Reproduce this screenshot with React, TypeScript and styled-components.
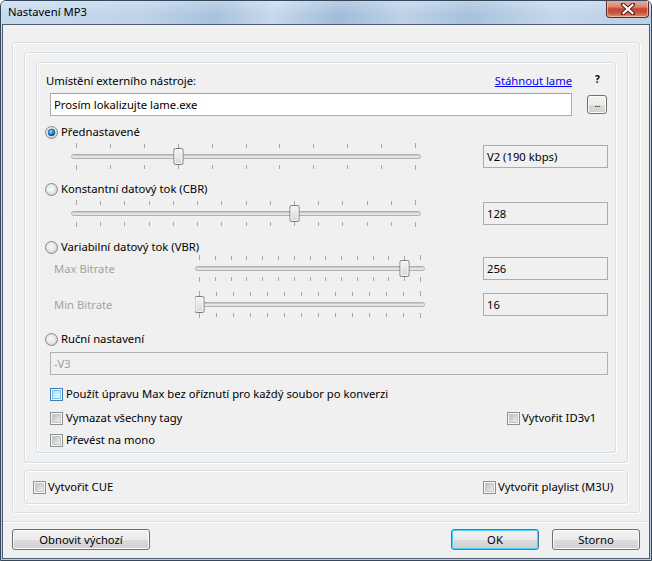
import React, { useId } from "react";
import styled, { createGlobalStyle } from "styled-components";

const FONT = `"Noto Sans", "Segoe UI", sans-serif`;

const GlobalStyle = createGlobalStyle`
  html, body { margin: 0; padding: 0; background: #ffffff; }
  body { font-family: ${FONT}; font-size: 11.25px; color: #000; }
  * { box-sizing: border-box; }
`;

const Window = styled.div`
  width: 652px;
  height: 561px;
  border: 1px solid #34475c;
  border-radius: 6px 6px 0 0;
  background: linear-gradient(180deg, #c9dcee 0%, #b5cde6 100%);
  display: flex;
  flex-direction: column;
  overflow: hidden;
`;

const TitleBar = styled.div`
  height: 23px;
  flex: 0 0 23px;
  display: flex;
  align-items: flex-start;
  justify-content: space-between;
  background:
    linear-gradient(180deg, rgba(255,255,255,0.25) 0%, rgba(255,255,255,0) 60%),
    linear-gradient(100deg, #c8dbee 0%, #bed3e9 22%, #a9c2dd 33%, #c6d9ec 42%, #a2bcd9 52%, #bdd2e8 62%, #a8c1dc 72%, #c4d8ec 85%, #b9cfe6 100%);
`;

const TitleText = styled.span`
  font-family: ${FONT};
  font-size: 11.25px;
  line-height: 22px;
  padding-left: 7px;
  color: #000;
`;

const CloseButton = styled.div`
  width: 43px;
  height: 18px;
  margin-top: -1px;
  margin-right: 2px;
  border: 1px solid #5b2a26;
  border-top: none;
  border-radius: 0 0 4px 4px;
  background: linear-gradient(180deg, #eab1a3 0%, #d9866f 40%, #c24a33 52%, #c9553c 75%, #e09077 100%);
  box-shadow: inset 0 0 0 1px rgba(255, 220, 210, 0.55);
  display: flex;
  align-items: center;
  justify-content: center;
`;

const Client = styled.div`
  flex: 1;
  margin: 0 1px 1px 1px;
  border: 1px solid #4e5e70;
  background: #f0f0f0;
  display: flex;
  flex-direction: column;
`;

const Body = styled.div`
  padding: 17px 9px 0 9px;
`;

const Group = styled.div<{ $pad: string; $gap?: number }>`
  border: 1px solid #d5dfe5;
  border-radius: 3px;
  box-shadow: inset 1px 1px 0 #ffffff, 1px 1px 0 #ffffff;
  padding: ${(p) => p.$pad};
  display: flex;
  flex-direction: column;
  gap: ${(p) => p.$gap ?? 0}px;
`;

const Row = styled.div<{ $mt?: number; $h?: number; $pl?: number }>`
  display: flex;
  align-items: center;
  margin-top: ${(p) => p.$mt ?? 0}px;
  height: ${(p) => p.$h ?? 16}px;
  padding-left: ${(p) => p.$pl ?? 0}px;
  font-size: 11.25px;
  line-height: 16px;
  white-space: nowrap;
`;

const Label = styled.span`
  flex: 1;
  padding-left: 1px;
`;

const LinkText = styled.span`
  color: #0000ff;
  text-decoration: underline;
`;

const Help = styled.span`
  width: 6px;
  margin-left: 23px;
  margin-right: 7px;
  font-weight: bold;
  font-size: 10px;
  align-self: flex-start;
  line-height: 10px;
  margin-top: 1px;
`;

const TextBox = styled.div<{ $w: number; $disabled?: boolean }>`
  width: ${(p) => p.$w}px;
  height: 23px;
  margin-left: 5px;
  border: 1px solid ${(p) => (p.$disabled ? "#adb2b5" : "#abadb3")};
  border-top-color: ${(p) => (p.$disabled ? "#adb2b5" : "#a0a3a8")};
  background: ${(p) => (p.$disabled ? "#f0f0f0" : "#ffffff")};
  color: ${(p) => (p.$disabled ? "#9d9d9d" : "#000")};
  padding-left: 3px;
  line-height: 21px;
  font-size: 11.25px;
`;

const BrowseButton = styled.div`
  width: 20px;
  height: 19px;
  margin-left: 15px;
  border: 1px solid #707070;
  border-radius: 3px;
  background: linear-gradient(180deg, #f2f2f2 0%, #ebebeb 50%, #dddddd 51%, #cfcfcf 100%);
  box-shadow: inset 0 0 0 1px #fcfcfc;
  font-size: 9px;
  line-height: 15px;
  text-align: center;
  letter-spacing: -0.5px;
`;

const OptionLabel = styled.span<{ $gap?: number }>`
  display: inline-flex;
  align-items: center;
  gap: ${(p) => p.$gap ?? 3}px;
`;

const FixedCell = styled.div<{ $w: number }>`
  flex: 0 0 ${(p) => p.$w}px;
  display: flex;
  align-items: center;
`;

const SideLabel = styled.span`
  flex: 0 0 150px;
  padding-left: 9px;
  color: #a3a3a3;
`;

const SliderSlot = styled.div<{ $ml?: number }>`
  margin-left: ${(p) => p.$ml ?? 0}px;
  display: flex;
  align-items: center;
`;

const ValueBox = styled.div`
  margin-left: auto;
  width: 125px;
  height: 23px;
  border: 1px solid #acacac;
  background: #f0f0f0;
  padding-left: 3px;
  line-height: 21px;
  font-size: 11.25px;
`;

const Separator = styled.div`
  margin-top: 8px;
  height: 2px;
  border-top: 1px solid #dadada;
  border-bottom: 1px solid #ffffff;
`;

const Footer = styled.div`
  display: flex;
  align-items: center;
  padding: 6px 9px 0 9px;
  gap: 13px;
`;

const Button = styled.div<{ $w: number; $default?: boolean; $push?: boolean }>`
  width: ${(p) => p.$w}px;
  height: 21px;
  margin-left: ${(p) => (p.$push ? "auto" : "0")};
  border: 1px solid ${(p) => (p.$default ? "#3c7fb1" : "#707070")};
  border-radius: 3px;
  background: linear-gradient(180deg, #f2f2f2 0%, #ebebeb 50%, #dddddd 51%, #cfcfcf 100%);
  box-shadow: inset 0 0 0 1px ${(p) => (p.$default ? "#48d1ff" : "#fbfbfb")};
  font-size: 11.25px;
  line-height: 19px;
  text-align: center;
`;

const IconSvg = styled.svg`
  display: block;
  flex: 0 0 auto;
`;

function Radio({ checked }: { checked?: boolean }) {
  const id = useId().replace(/:/g, "");
  return (
    <IconSvg width={13} height={13} viewBox="0 0 13 13">
      <defs>
        <radialGradient id={`g${id}`} cx="45%" cy="45%" r="60%">
          <stop offset="0" stopColor="#fbfbfb" />
          <stop offset="0.6" stopColor="#e6e6e6" />
          <stop offset="1" stopColor="#c2c2c2" />
        </radialGradient>
        <radialGradient id={`b${id}`} cx="40%" cy="35%" r="70%">
          <stop offset="0" stopColor="#a8e0ff" />
          <stop offset="0.45" stopColor="#2f8fdc" />
          <stop offset="1" stopColor="#0c3f7c" />
        </radialGradient>
      </defs>
      <circle cx="6.5" cy="6.5" r="6" fill={`url(#g${id})`} stroke="#8b8b8b" />
      {checked && <circle cx="6.5" cy="6.5" r="3.4" fill={`url(#b${id})`} stroke="#1d4f86" strokeWidth="0.7" />}
    </IconSvg>
  );
}

function Checkbox({ hot }: { hot?: boolean }) {
  const id = useId().replace(/:/g, "");
  return (
    <IconSvg width={13} height={13} viewBox="0 0 13 13">
      <defs>
        <linearGradient id={`c${id}`} x1="0" y1="0" x2="1" y2="1">
          <stop offset="0" stopColor={hot ? "#b1dcfb" : "#b7bbc0"} />
          <stop offset="1" stopColor={hot ? "#eaf6fe" : "#f3f3f3"} />
        </linearGradient>
      </defs>
      <rect x="0.5" y="0.5" width="12" height="12" fill="#f8f8f8" stroke={hot ? "#3c7fb1" : "#8e8f8f"} />
      <rect x="2.5" y="2.5" width="8" height="8" fill={`url(#c${id})`} stroke={hot ? "#79c0ef" : "#c5c8cc"} />
    </IconSvg>
  );
}

function Slider({ width, ticks, index, inset }: { width: number; ticks: number; index: number; inset: number }) {
  const id = useId().replace(/:/g, "");
  const step = (width - 1 - inset * 2) / (ticks - 1);
  const xs = Array.from({ length: ticks }, (_, i) => Math.round(inset + i * step) + 0.5);
  const tx = xs[index];
  return (
    <IconSvg width={width} height={27} viewBox={`0 0 ${width} 27`}>
      <defs>
        <linearGradient id={`t${id}`} x1="0" y1="0" x2="0" y2="1">
          <stop offset="0" stopColor="#f7f7f7" />
          <stop offset="1" stopColor="#d6d6d6" />
        </linearGradient>
      </defs>
      {xs.map((x, i) => {
        const end = i === 0 || i === ticks - 1;
        return (
          <g key={i} stroke="#a8a8a8" strokeWidth="1">
            <line x1={x} y1={end ? 0 : 1} x2={x} y2={5} />
            <line x1={x} y1={22} x2={x} y2={end ? 27 : 26} />
          </g>
        );
      })}
      <rect x="0.5" y="11.5" width={width - 1} height="4" rx="2" fill="#e4e4e4" stroke="#b0b0b0" />
      <line x1="2" y1="12.5" x2={width - 2} y2="12.5" stroke="#c8c8c8" />
      <rect x={tx - 4.5} y="5.5" width="9" height="16" rx="1.5" fill={`url(#t${id})`} stroke="#7a7a7a" />
      <rect x={tx - 3.5} y="6.5" width="7" height="14" rx="1" fill="none" stroke="#fdfdfd" strokeOpacity="0.8" />
    </IconSvg>
  );
}

function CloseX() {
  return (
    <IconSvg width={14} height={12} viewBox="0 0 14 12">
      <path d="M2 1.5 L12 10.5 M12 1.5 L2 10.5" stroke="#5a1a14" strokeWidth="4" strokeLinecap="square" />
      <path d="M2.5 2 L11.5 10 M11.5 2 L2.5 10" stroke="#ffffff" strokeWidth="2.2" strokeLinecap="square" />
    </IconSvg>
  );
}

export default function App() {
  return (
    <>
      <GlobalStyle />
      <Window>
        <TitleBar>
          <TitleText>Nastavení MP3</TitleText>
          <CloseButton>
            <CloseX />
          </CloseButton>
        </TitleBar>
        <Client>
          <Body>
            <Group $pad="9px 11px 8px 11px" $gap={7}>
              <Group $pad="9px 11px 9px 11px">
                <Group $pad="0 7px 4px 8px">
                  <Row $mt={10}>
                    <Label>Umístění externího nástroje:</Label>
                    <LinkText>Stáhnout lame</LinkText>
                    <Help>?</Help>
                  </Row>
                  <Row $mt={4} $h={23}>
                    <TextBox $w={522}>Prosím lokalizujte lame.exe</TextBox>
                    <BrowseButton>...</BrowseButton>
                  </Row>
                  <Row $mt={8}>
                    <OptionLabel>
                      <Radio checked />
                      Přednastavené
                    </OptionLabel>
                  </Row>
                  <Row $mt={3} $h={27}>
                    <SliderSlot $ml={26}>
                      <Slider width={350} ticks={11} index={3} inset={5} />
                    </SliderSlot>
                    <ValueBox>V2 (190 kbps)</ValueBox>
                  </Row>
                  <Row $mt={11}>
                    <OptionLabel>
                      <Radio />
                      Konstantní datový tok (CBR)
                    </OptionLabel>
                  </Row>
                  <Row $mt={3} $h={27}>
                    <SliderSlot $ml={26}>
                      <Slider width={350} ticks={15} index={9} inset={5} />
                    </SliderSlot>
                    <ValueBox>128</ValueBox>
                  </Row>
                  <Row $mt={12}>
                    <OptionLabel>
                      <Radio />
                      Variabilní datový tok (VBR)
                    </OptionLabel>
                  </Row>
                  <Row $mt={0} $h={27}>
                    <SideLabel>Max Bitrate</SideLabel>
                    <SliderSlot>
                      <Slider width={230} ticks={15} index={13} inset={4} />
                    </SliderSlot>
                    <ValueBox>256</ValueBox>
                  </Row>
                  <Row $mt={9} $h={27}>
                    <SideLabel>Min Bitrate</SideLabel>
                    <SliderSlot>
                      <Slider width={230} ticks={14} index={0} inset={4} />
                    </SliderSlot>
                    <ValueBox>16</ValueBox>
                  </Row>
                  <Row $mt={13}>
                    <OptionLabel>
                      <Radio />
                      Ruční nastavení
                    </OptionLabel>
                  </Row>
                  <Row $mt={5} $h={23}>
                    <TextBox $w={558} $disabled>
                      -V3
                    </TextBox>
                  </Row>
                  <Row $mt={11} $pl={5}>
                    <OptionLabel>
                      <Checkbox hot />
                      Použít úpravu Max bez oříznutí pro každý soubor po konverzi
                    </OptionLabel>
                  </Row>
                  <Row $mt={8} $pl={5}>
                    <FixedCell $w={457}>
                      <OptionLabel>
                        <Checkbox />
                        Vymazat všechny tagy
                      </OptionLabel>
                    </FixedCell>
                    <OptionLabel $gap={2}>
                      <Checkbox />
                      Vytvořit ID3v1
                    </OptionLabel>
                  </Row>
                  <Row $mt={6} $pl={5}>
                    <OptionLabel>
                      <Checkbox />
                      Převést na mono
                    </OptionLabel>
                  </Row>
                </Group>
              </Group>
              <Group $pad="8px 8px 8px 8px">
                <Row>
                  <FixedCell $w={450}>
                    <OptionLabel $gap={2}>
                      <Checkbox />
                      Vytvořit CUE
                    </OptionLabel>
                  </FixedCell>
                  <OptionLabel $gap={2}>
                    <Checkbox />
                    Vytvořit playlist (M3U)
                  </OptionLabel>
                </Row>
              </Group>
            </Group>
          </Body>
          <Separator />
          <Footer>
            <Button $w={138}>Obnovit výchozí</Button>
            <Button $w={88} $default $push>
              OK
            </Button>
            <Button $w={88}>Storno</Button>
          </Footer>
        </Client>
      </Window>
    </>
  );
}
